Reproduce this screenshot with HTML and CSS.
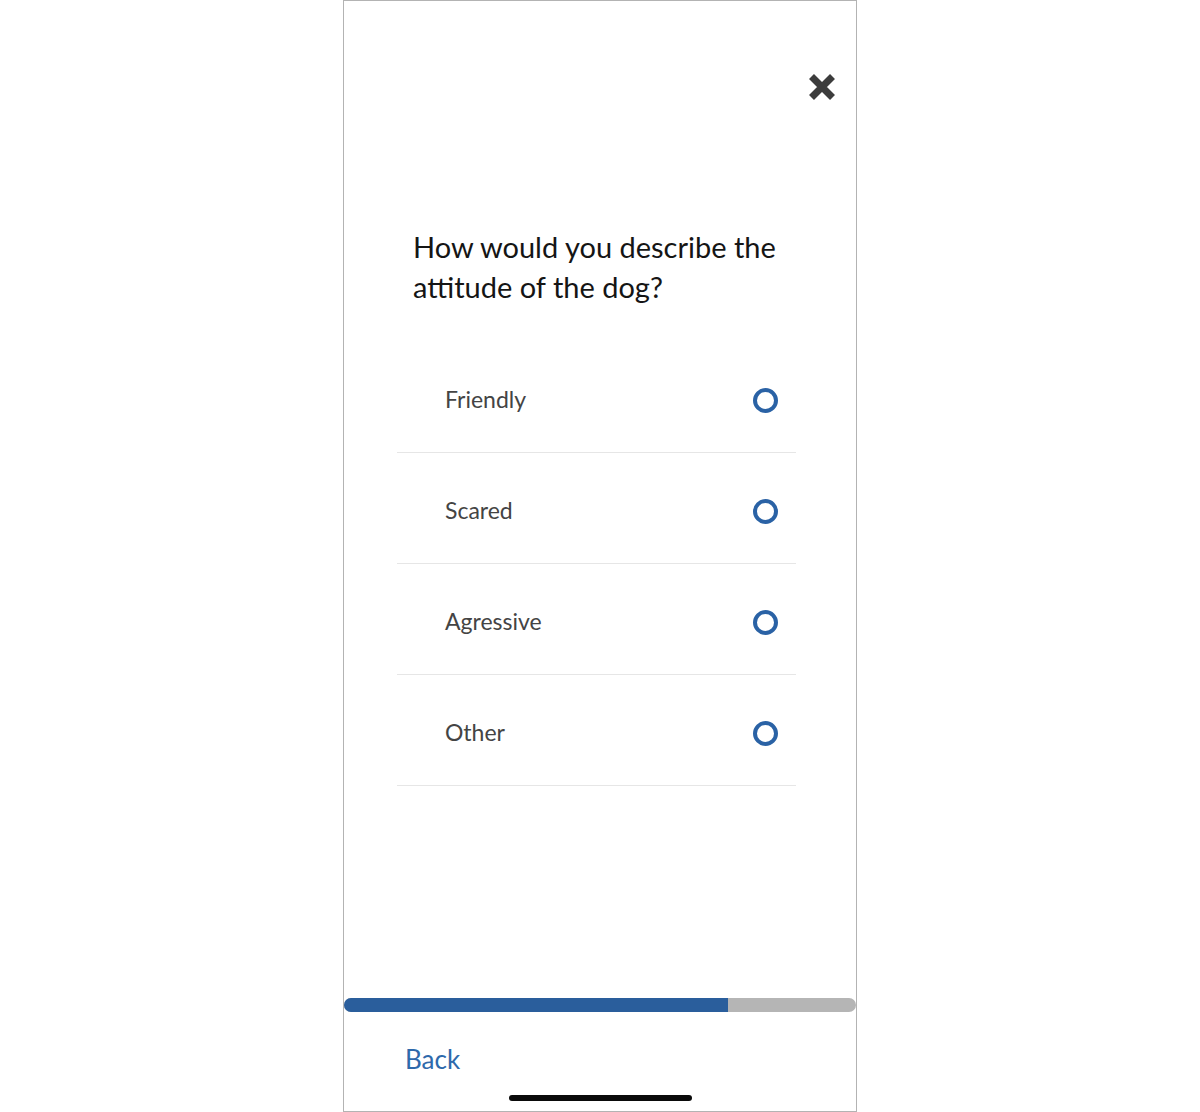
FILE: index.html
```html
<!DOCTYPE html>
<html lang="en">
<head>
<meta charset="utf-8">
<title>Dog attitude</title>
<link rel="stylesheet" href="styles.css">
</head>
<body>
<div class="phone">
  <header class="top">
    <button class="close" aria-label="Close">
      <svg width="30" height="30" viewBox="0 0 30 30" aria-hidden="true">
        <path d="M4.5 4.5 L25.5 25.5 M25.5 4.5 L4.5 25.5" stroke="#3c3c3c" stroke-width="7" stroke-linecap="butt" fill="none"/>
      </svg>
    </button>
  </header>
  <h1 class="question">How would you describe the attitude of the dog?</h1>
  <ul class="options">
    <li class="option"><span class="label">Friendly</span><span class="radio"></span></li>
    <li class="option"><span class="label">Scared</span><span class="radio"></span></li>
    <li class="option"><span class="label">Agressive</span><span class="radio"></span></li>
    <li class="option"><span class="label">Other</span><span class="radio"></span></li>
  </ul>
  <div class="progress"><div class="fill" style="width:75%"></div></div>
  <footer class="bottom">
    <a class="back" href="#">Back</a>
    <div class="home"></div>
  </footer>
</div>
</body>
</html>
```
FILE: styles.css
```css
html, body {
  margin: 0;
  padding: 0;
  background: #ffffff;
}
body {
  font-family: Lato, "Open Sans", sans-serif;
}
.phone {
  box-sizing: border-box;
  width: 514px;
  height: 1112px;
  margin: 0 auto;
  border: 1px solid #b3b3b3;
  display: flex;
  flex-direction: column;
  background: #fff;
}
.top {
  display: flex;
  justify-content: flex-end;
  padding: 71px 19px 0 0;
}
.close {
  border: 0;
  background: none;
  padding: 0;
  width: 30px;
  height: 30px;
  display: block;
}
.close svg { display: block; }
.question {
  margin: 125px 40px 0 69px;
  font-size: 29px;
  line-height: 40px;
  font-weight: 400;
  color: #151515;
}
.options {
  list-style: none;
  margin: 35px 60px 0 53px;
  padding: 0;
}
.option {
  box-sizing: border-box;
  height: 111px;
  padding: 7px 18px 0 48px;
  border-bottom: 1px solid #e6e6e6;
  display: flex;
  align-items: center;
  justify-content: space-between;
}
.label {
  font-size: 23px;
  line-height: 28px;
  margin-bottom: 4px;
  color: #444444;
}
.radio {
  box-sizing: border-box;
  width: 25px;
  height: 25px;
  border: 4px solid #2a62a5;
  border-radius: 50%;
}
.progress {
  margin-top: auto;
  height: 14px;
  background: #b5b5b5;
  border-radius: 7px;
  overflow: hidden;
}
.fill {
  height: 100%;
  background: #2a5e9c;
}
.bottom {
  display: flex;
  flex-direction: column;
  padding: 32px 0 10px 0;
}
.back {
  margin-left: 61px;
  font-size: 26px;
  line-height: 31px;
  color: #2e69ab;
  text-decoration: none;
  align-self: flex-start;
}
.home {
  align-self: center;
  margin-top: 20px;
  width: 183px;
  height: 6px;
  border-radius: 3px;
  background: #0a0a0a;
}
```
